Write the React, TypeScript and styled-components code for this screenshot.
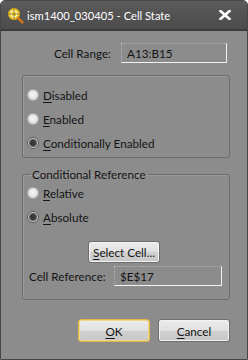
import React from "react";
import styled, { createGlobalStyle } from "styled-components";

const GlobalStyle = createGlobalStyle`
  html, body {
    margin: 0;
    padding: 0;
    background: #ffffff;
  }
  body {
    font-family: Lato, "Open Sans", sans-serif;
  }
`;

const Window = styled.div`
  width: 248px;
  height: 360px;
  box-sizing: border-box;
  border: 1px solid #474747;
  border-radius: 5px 5px 0 0;
  background: #8c8c8c;
  display: flex;
  flex-direction: column;
  overflow: hidden;
  font-size: 11.7px;
  color: #141414;
`;

const TitleBar = styled.div`
  height: 28px;
  flex-shrink: 0;
  display: flex;
  align-items: center;
  padding: 0 0 0 6px;
  background: linear-gradient(#5b5b5b, #4c4c4c);
  border-bottom: 2px solid #3c3c3c;
  color: #ffffff;
`;

const TitleText = styled.span`
  margin-left: 3px;
  font-size: 11.2px;
  flex: 1;
`;

const CloseButton = styled.div`
  width: 36px;
  height: 28px;
  display: flex;
  align-items: center;
  justify-content: center;
  margin-right: 4px;
`;

const Body = styled.div`
  flex: 1;
  display: flex;
  flex-direction: column;
  padding: 12px 17px 0 20px;
`;

const FieldRow = styled.div<{ $indent: number }>`
  display: flex;
  align-items: center;
  padding-left: ${(p) => p.$indent}px;
`;

const Label = styled.span<{ $width: number }>`
  width: ${(p) => p.$width}px;
  white-space: nowrap;
`;

const ValueBox = styled.div<{ $width: number }>`
  width: ${(p) => p.$width}px;
  height: 20px;
  box-sizing: border-box;
  display: flex;
  align-items: center;
  padding-left: 5px;
  border-top: 1px dotted #b4b4b4;
  border-left: 1px dotted #b4b4b4;
  border-right: 1px solid #f2f2f2;
  border-bottom: 1px solid #f2f2f2;
`;

const Group = styled.fieldset<{ $top: number; $height: number }>`
  margin: ${(p) => p.$top}px 0 0 1px;
  padding: 0 0 0 4px;
  width: 208px;
  height: ${(p) => p.$height}px;
  box-sizing: border-box;
  border: 1px solid #6c6c6c;
  border-radius: 3px;
  box-shadow: inset 1px 1px 0 #9c9c9c;
  display: flex;
  flex-direction: column;
  min-inline-size: 0;
`;

const Legend = styled.legend`
  padding: 0 2px;
  margin-left: 3px;
  line-height: 16px;
`;

const RadioRow = styled.label<{ $top: number }>`
  display: flex;
  align-items: center;
  height: 16px;
  margin-top: ${(p) => p.$top}px;
  gap: 4px;
`;

const RadioDot = styled.span<{ $checked?: boolean }>`
  width: 12px;
  height: 12px;
  flex-shrink: 0;
  box-sizing: border-box;
  border-radius: 50%;
  border: 1px solid ${(p) => (p.$checked ? "#5a5a5a" : "#a8a8a8")};
  background: ${(p) =>
    p.$checked
      ? "radial-gradient(circle, #3a3a3a 0 2.5px, #5e5e5e 3.5px, #c8c8c8 4.5px, #d8d8d8 100%)"
      : "radial-gradient(circle at 50% 45%, #f0f0f0 0 2px, #dadada 5px, #c6c6c6 100%)"};
`;

const Key = styled.u`
  text-decoration-thickness: 1px;
  text-underline-offset: 2px;
`;

const ButtonRow = styled.div<{ $top: number; $justify: string; $indent?: number }>`
  display: flex;
  justify-content: ${(p) => p.$justify};
  gap: 8px;
  margin-top: ${(p) => p.$top}px;
  padding-left: ${(p) => p.$indent ?? 0}px;
`;

const Button = styled.div<{ $default?: boolean; $height: number }>`
  width: 72px;
  height: ${(p) => p.$height}px;
  box-sizing: border-box;
  display: flex;
  align-items: center;
  justify-content: center;
  border-radius: 3px;
  border: 1px solid ${(p) => (p.$default ? "#e2b640" : "#6f6f6f")};
  background: linear-gradient(#ececec, #e0e0e0 50%, #d0d0d0 51%, #c8c8c8);
  box-shadow: inset 0 0 0 1px ${(p) => (p.$default ? "#f0d68a" : "#f2f2f2")};
  color: #141414;
`;

const AppIcon = () => (
  <svg width="17" height="17" viewBox="0 0 17 17">
    <circle cx="7" cy="7" r="5.6" fill="#f2d43a" stroke="#c9a018" strokeWidth="1" />
    <circle cx="7" cy="7" r="3" fill="none" stroke="#ffffff" strokeWidth="1" />
    <path d="M7 1.5v11M1.5 7h11" stroke="#8a6a10" strokeWidth="0.8" />
    <path d="M10.8 10.8l4.6 4.6" stroke="#d8731a" strokeWidth="2.4" strokeLinecap="round" />
  </svg>
);

const CloseIcon = () => (
  <svg width="12" height="10" viewBox="0 0 12 10">
    <path d="M1.5 1l9 8M10.5 1l-9 8" stroke="#ffffff" strokeWidth="2.6" strokeLinecap="square" />
  </svg>
);

export default function App() {
  return (
    <>
      <GlobalStyle />
      <Window>
        <TitleBar>
          <AppIcon />
          <TitleText>ism1400_030405 - Cell State</TitleText>
          <CloseButton>
            <CloseIcon />
          </CloseButton>
        </TitleBar>
        <Body>
          <FieldRow $indent={33}>
            <Label $width={67}>Cell Range:</Label>
            <ValueBox $width={106}>A13:B15</ValueBox>
          </FieldRow>

          <Group $top={12} $height={83}>
            <RadioRow $top={11}>
              <RadioDot />
              <span><Key>D</Key>isabled</span>
            </RadioRow>
            <RadioRow $top={8}>
              <RadioDot />
              <span><Key>E</Key>nabled</span>
            </RadioRow>
            <RadioRow $top={8}>
              <RadioDot $checked />
              <span><Key>C</Key>onditionally Enabled</span>
            </RadioRow>
          </Group>

          <Group $top={8} $height={134}>
            <Legend>Conditional Reference</Legend>
            <RadioRow $top={3}>
              <RadioDot />
              <span><Key>R</Key>elative</span>
            </RadioRow>
            <RadioRow $top={8}>
              <RadioDot $checked />
              <span><Key>A</Key>bsolute</span>
            </RadioRow>
            <ButtonRow $top={16} $justify="flex-start" $indent={61}>
              <Button $height={22}>
                <span><Key>S</Key>elect Cell...</span>
              </Button>
            </ButtonRow>
            <FieldRow $indent={2} style={{ marginTop: 3 }}>
              <Label $width={85}>Cell Reference:</Label>
              <ValueBox $width={108}>$E$17</ValueBox>
            </FieldRow>
          </Group>

          <ButtonRow $top={19} $justify="flex-end">
            <Button $default $height={23}>
              <Key>O</Key>K
            </Button>
            <Button $height={23}>
              <span><Key>C</Key>ancel</span>
            </Button>
          </ButtonRow>
        </Body>
      </Window>
    </>
  );
}
